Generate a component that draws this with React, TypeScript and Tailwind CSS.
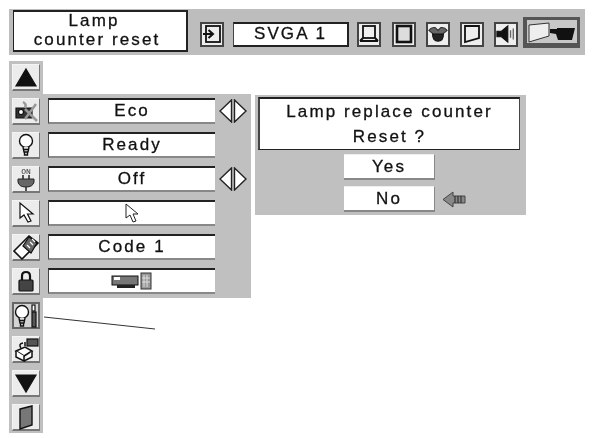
import React from "react";

const Tile = ({ children, active }: { children?: React.ReactNode; active?: boolean }) => (
  <div className={`w-[28px] h-[27px] flex items-center justify-center ${active ? "bg-[#d4d4d4] border-2 border-[#666]" : "bg-[#ececec] border-t border-l border-t-[#f4f4f4] border-l-[#f4f4f4] border-b-2 border-r border-b-[#777] border-r-[#777]"}`}>
    {children}
  </div>
);

const TopTile = ({ children }: { children: React.ReactNode }) => (
  <div className="w-[24px] h-[25px] flex items-center justify-center border-2 border-[#444] bg-[#eeeeee]">{children}</div>
);

const Svg = ({ children, w = 24, h = 24 }: { children: React.ReactNode; w?: number; h?: number }) => (
  <svg width={w} height={h} viewBox={`0 0 ${w} ${h}`} fill="none" stroke="#111" strokeWidth="1.2">
    {children}
  </svg>
);

const Bulb = () => (
  <>
    <circle cx="8" cy="8" r="6.500" fill="#fff" strokeWidth="1.400" />
    <path d="M5 14 L6 19 H10 L11 14 M6 16.500 H10 M6.500 19 V22 H9.500 V19" fill="#ddd" strokeWidth="1.400" />
  </>
);

const textBase = "text-[17px] tracking-[2.1px] [-webkit-text-stroke:0.3px_#111]";

const Value = ({ children, arrows }: { children?: React.ReactNode; arrows?: boolean }) => (
  <div className="flex items-center h-[27px]">
    <div className={`w-[167px] h-[26px] ml-[5px] bg-white border-t-2 border-t-[#222] border-l border-l-[#444] border-b-2 border-b-[#888] flex items-center justify-center text-[#111] ${textBase}`}>
      {children}
    </div>
    {arrows && (
      <svg width="28" height="24" viewBox="0 0 28 24" className="ml-[4px]" fill="#fff" stroke="#222" strokeWidth="1.400">
        <path d="M12.500 1 V23 L1 12 Z" />
        <path d="M15.500 1 V23 L27 12 Z" />
      </svg>
    )}
  </div>
);

const ProjectorGlyph = () => (
  <svg width="42" height="18" viewBox="0 0 42 18">
    <rect x="1" y="4" width="26" height="9" fill="#777" stroke="#111" />
    <rect x="3" y="5" width="6" height="3" fill="#fff" />
    <rect x="6" y="13" width="18" height="3" fill="#222" />
    <rect x="30" y="1" width="10" height="16" fill="#999" stroke="#333" />
    <path d="M33 3 V15 M36 3 V15 M31 6 H39 M31 10 H39" stroke="#ddd" />
  </svg>
);

const Choice = ({ children }: { children: React.ReactNode }) => (
  <div className={`w-[91px] h-[26px] bg-white border-t border-t-[#eee] border-b-2 border-b-[#888] border-r border-r-[#888] flex items-center justify-center ${textBase}`}>
    {children}
  </div>
);

export default function App() {
  return (
    <div className="w-[599px] h-[438px] bg-white relative overflow-hidden pl-[9px] pt-[9px] text-[#111] blur-[0.4px] font-['Liberation_Sans',Arial,sans-serif]">
      {/* top bar */}
      <div className="w-[576px] h-[46px] bg-[#bdbdbd] flex items-start pl-[4px] pt-[1px]">
        <div className={`w-[175px] h-[42px] bg-white border-t-2 border-l border-r-2 border-b-2 border-[#222] flex flex-col items-center justify-center leading-[19px] pb-[3px] pr-[6px] ${textBase}`}>
          <span className="pr-[6px]">Lamp</span>
          <span>counter reset</span>
        </div>
        <div className="ml-[12px] mt-[10px] flex items-center">
          <TopTile>
            <Svg w={20} h={20}>
              <rect x="4" y="2" width="14" height="16" strokeWidth="1.800" />
              <path d="M1 10 H10 M6.500 6 L11 10 L6.500 14" strokeWidth="2" />
            </Svg>
          </TopTile>
          <div className={`w-[116px] h-[25px] ml-[9px] bg-white border-t-2 border-t-[#222] border-l border-l-[#444] border-r-2 border-r-[#222] border-b-2 border-b-[#222] flex items-center justify-center ${textBase}`}>
            SVGA 1
          </div>
          <div className="ml-[8px]">
            <TopTile>
              <Svg w={20} h={20}>
                <rect x="4" y="2" width="12" height="12" strokeWidth="1.800" fill="#eee" />
                <path d="M1 17 H19 M4 14 L1 17 M16 14 L19 17" strokeWidth="2" />
              </Svg>
            </TopTile>
          </div>
          <div className="ml-[11px]">
            <TopTile>
              <Svg w={20} h={20}>
                <rect x="3" y="2" width="14" height="16" strokeWidth="2.600" fill="#ddd" />
              </Svg>
            </TopTile>
          </div>
          <div className="ml-[10px]">
            <TopTile>
              <Svg w={22} h={20}>
                <path d="M1 6 Q4 2 8 3 L11 6 L14 3 Q18 2 21 6 L15 11 H7 Z" fill="#666" stroke="#333" />
                <path d="M5 10 H17 Q17 18 11 18 Q5 18 5 10 Z" fill="#222" />
              </Svg>
            </TopTile>
          </div>
          <div className="ml-[10px]">
            <TopTile>
              <Svg w={20} h={20}>
                <path d="M3 2 H17 V14 L3 18 Z" strokeWidth="1.800" fill="#eee" />
              </Svg>
            </TopTile>
          </div>
          <div className="ml-[10px]">
            <TopTile>
              <Svg w={22} h={20}>
                <path d="M1 7 H6 L13 1 V19 L6 13 H1 Z" fill="#111" />
                <path d="M16 6 V14 M19 4 V16" stroke="#666" strokeWidth="1.500" />
              </Svg>
            </TopTile>
          </div>
          <div className="ml-[5px] -mt-[3px] w-[57px] h-[31px] bg-[#555] pt-[3px] pl-[4px] pr-[3px] pb-[5px]">
            <div className="w-full h-full bg-[#c8c8c8] flex items-center justify-center">
              <svg width="48" height="22" viewBox="0 0 48 22">
                <path d="M1 4 L21 2 V15 L1 21 Z" fill="#eee" stroke="#333" />
                <path d="M22 8 H29 V7 H47 L44 19 H30 L28 13 L22 12 Z" fill="#111" />
              </svg>
            </div>
          </div>
        </div>
      </div>

      {/* main area */}
      <div className="flex items-start mt-[6px]">
        <div className="w-[34px] bg-[#c0c0c0] pl-[3px] pt-[3px] pb-[2px] flex flex-col gap-[7px]">
          <Tile>
            <Svg w={24} h={21}>
              <path d="M12 2 L22 19 H2 Z" fill="#111" />
            </Svg>
          </Tile>
          <Tile>
            <Svg w={26} h={24}>
              <path d="M3 9 H19 V19 H3 Z" fill="#333" />
              <path d="M10 3 Q14 5 12 9 M23 5 L12 20 M12 10 L24 22" stroke="#999" strokeWidth="2.500" />
              <circle cx="8" cy="13" r="2.500" fill="#fff" />
            </Svg>
          </Tile>
          <Tile>
            <Svg w={16} h={24}>
              <Bulb />
            </Svg>
          </Tile>
          <Tile>
            <svg width="22" height="25" viewBox="0 0 22 25" fill="none" stroke="#222">
              <text x="11" y="7" textAnchor="middle" fontSize="8" fill="#333" stroke="none" fontFamily="Liberation Mono">ON</text>
              <path d="M8 8 V12 M14 8 V12" strokeWidth="1.500" />
              <path d="M3 12 H19 V15 Q18 20 11 20 Q4 20 3 15 Z" fill="#666" />
              <path d="M11 20 V24" strokeWidth="1.500" />
            </svg>
          </Tile>
          <Tile>
            <Svg w={18} h={24}>
              <path d="M3 2 V17 L7 14 L11 21 L14 20 L10.500 13 L16 13 Z" fill="#fff" />
            </Svg>
          </Tile>
          <Tile>
            <Svg w={26} h={26}>
              <path d="M1 17 L16 2 L25 9 L9 25 Z" fill="#fff" strokeWidth="1.600" />
              <path d="M10 12 L18 19 L24 9 L16 3 Z" fill="#666" />
              <path d="M14 11 L17 14 M17 8 L20 11 M19 5 L22 8" stroke="#fff" />
            </Svg>
          </Tile>
          <Tile>
            <Svg w={20} h={24}>
              <path d="M6 11 V7 Q6 3 10 3 Q14 3 14 7 V11" strokeWidth="2.200" />
              <rect x="3" y="11" width="14" height="11" fill="#444" rx="1" />
            </Svg>
          </Tile>
          <Tile active>
            <Svg w={24} h={24}>
              <Bulb />
              <rect x="18" y="1" width="3" height="6" fill="#fff" />
              <rect x="18" y="8" width="4" height="15" fill="#555" />
            </Svg>
          </Tile>
          <Tile>
            <Svg w={26} h={25}>
              <path d="M3 14 L12 10 L19 14 L11 19 Z" fill="#fff" strokeWidth="1.500" />
              <path d="M3 14 V20 L11 24 V19 M19 14 V20 L11 24" fill="#fff" strokeWidth="1.500" />
              <path d="M8 11 Q5 7 10 6 M12 9 V5" strokeWidth="1.500" />
              <rect x="14" y="2" width="11" height="7" fill="#555" />
            </Svg>
          </Tile>
          <Tile>
            <Svg w={24} h={21}>
              <path d="M2 2 H22 L12 19 Z" fill="#111" />
            </Svg>
          </Tile>
          <Tile>
            <svg width="18" height="26" viewBox="0 0 18 26" stroke="#111" strokeWidth="1.400">
              <path d="M3 5 L15 2 V21 L3 25 Z" fill="#777" />
            </svg>
          </Tile>
        </div>

        <div className="w-[208px] h-[204px] mt-[33px] bg-[#c0c0c0] pt-[3px] flex flex-col gap-[7px]">
          <Value arrows>Eco</Value>
          <Value>Ready</Value>
          <Value arrows>Off</Value>
          <Value>
            <svg width="16" height="22" viewBox="0 0 16 22" fill="#fff" stroke="#222">
              <path d="M2 2 V16 L6 13 L9 20 L12 19 L9 12 L14 12 Z" />
            </svg>
          </Value>
          <Value>Code 1</Value>
          <Value>
            <ProjectorGlyph />
          </Value>
        </div>

        <div className="w-[271px] h-[120px] mt-[34px] ml-[4px] bg-[#c0c0c0] pl-[3px] pt-[2px]">
          <div className={`w-[262px] h-[53px] bg-white border-t-2 border-t-[#222] border-l-2 border-l-[#444] border-r border-r-[#444] border-b border-b-[#222] flex flex-col items-center justify-center leading-[25px] ${textBase}`}>
            <span>Lamp replace counter</span>
            <span>Reset ?</span>
          </div>
          <div className="ml-[86px] mt-[4px] flex flex-col gap-[6px]">
            <Choice>Yes</Choice>
            <div className="flex items-center">
              <Choice>No</Choice>
              <svg width="24" height="17" viewBox="0 0 24 17" className="ml-[7px]" stroke="#444">
                <path d="M1 8.500 L11 1 V5 H23 V12 H11 V16 Z" fill="#888" />
                <path d="M13 5 V12 M16 5 V12 M19 5 V12" stroke="#222" />
              </svg>
            </div>
          </div>
        </div>
      </div>

      {/* leader line */}
      <svg width="599" height="438" className="absolute left-0 top-0 pointer-events-none">
        <line x1="44" y1="317" x2="155" y2="329" stroke="#333" strokeWidth="1" />
      </svg>
    </div>
  );
}
